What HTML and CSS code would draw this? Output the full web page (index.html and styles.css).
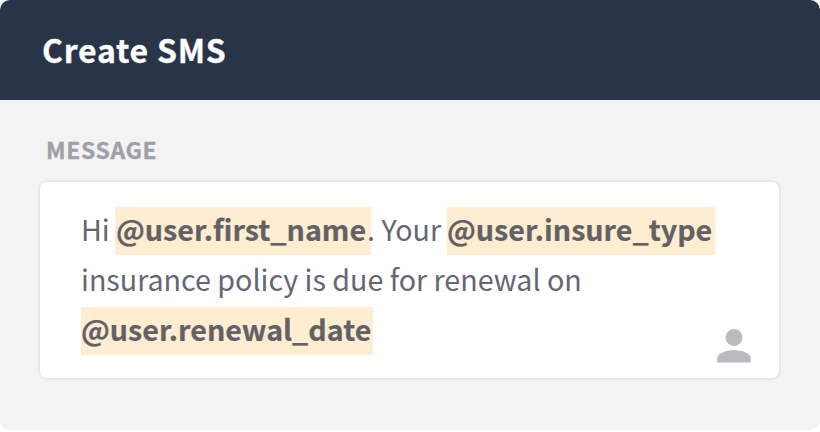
FILE: index.html
```
<!DOCTYPE html>
<html lang="en">
<head>
    <meta charset="utf-8">
    <title>Create SMS</title>
    <link rel="stylesheet" href="styles.css">
</head>
<body>
    <div class="card">
        <header class="card-header">
            <h1>Create SMS</h1>
        </header>
        <main class="card-body">
            <h2 class="label">MESSAGE</h2>
            <div class="message">
                <div class="message-text">
                    <p class="line"><span class="hi">Hi</span><b class="tag first-name">@user.first_name</b><span class="your">. Your</span><b class="tag insure-type">@user.insure_type</b></p>
                    <p class="line">insurance policy is due for renewal on</p>
                    <p class="line"><b class="tag renewal-date">@user.renewal_date</b></p>
                </div>
                <svg class="user-icon" viewBox="0 0 34 34" width="34" height="34">
                    <circle cx="17" cy="8.500" r="8.400"/>
                    <path d="M17 21C9 21 0.200 24.500 0.200 29.500V33.500H33.800V29.500C33.800 24.500 25 21 17 21Z"/>
                </svg>
            </div>
        </main>
    </div>
</body>
</html>
```
FILE: styles.css
```
* {
    box-sizing: border-box;
}
body {
    margin: 0;
    background: #fff;
    font-family: "Noto Sans CJK SC", "Noto Sans", sans-serif;
}
h1, h2, p {
    margin: 0;
}
.card {
    height: 430px;
    border-radius: 10px;
    background: #f3f3f3;
    overflow: hidden;
}
.card-header {
    height: 100px;
    padding: 24px 42px;
    background: #283447;
    color: #fff;
}
.card-header h1 {
    font-size: 32px;
    line-height: 50px;
    font-weight: 700;
    letter-spacing: 0.75px;
    -webkit-text-stroke: 0.3px #fff;
}
.card-body {
    padding: 34px 39px 0 38px;
}
.label {
    padding-left: 8px;
    font-size: 23px;
    line-height: 30px;
    letter-spacing: 0.6px;
    color: #a0a1a8;
    -webkit-text-stroke: 0.3px #a0a1a8;
}
.message {
    display: flex;
    justify-content: space-between;
    align-items: flex-end;
    height: 200px;
    margin-top: 16px;
    padding: 25px 28px 15px 41px;
    border: 2px solid #e8e8e8;
    border-radius: 9px;
    background: #fff;
}
.message-text {
    align-self: flex-start;
    color: #656673;
    font-size: 28.65px;
}
.line {
    display: flex;
    height: 50px;
    line-height: 44px;
    white-space: pre;
}
.tag {
    height: 48px;
    background: #feedd0;
    color: #626266;
    -webkit-text-stroke: 0.2px #626266;
}
.hi {
    width: 34px;
}
.first-name {
    width: 256px;
    padding-left: 1px;
}
/* the period tucks against the end of the tag */
.your {
    width: 80px;
    margin-left: -4px;
}
.insure-type {
    width: 268px;
}
.renewal-date {
    width: 292px;
}
.user-icon {
    flex: none;
    fill: #babac1;
}
```
